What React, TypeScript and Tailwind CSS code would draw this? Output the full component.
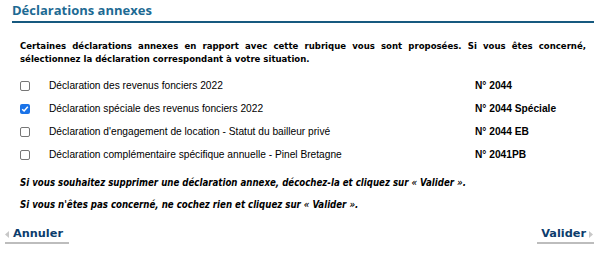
import React from "react";

const rows = [
  { label: "Déclaration des revenus fonciers 2022", code: "N° 2044", checked: false },
  { label: "Déclaration spéciale des revenus fonciers 2022", code: "N° 2044 Spéciale", checked: true },
  { label: "Déclaration d'engagement de location - Statut du bailleur privé", code: "N° 2044 EB", checked: false },
  { label: "Déclaration complémentaire spécifique annuelle - Pinel Bretagne", code: "N° 2041PB", checked: false },
];

function Box({ checked }: { checked: boolean }) {
  if (checked) {
    return (
      <span className="flex h-[10px] w-[10px] items-center justify-center rounded-[2px] bg-[#1a73e8]">
        <svg width="8" height="8" viewBox="0 0 8 8">
          <path d="M1.2 4.2 L3.1 6 L6.8 1.8" fill="none" stroke="#fff" strokeWidth="1.5" />
        </svg>
      </span>
    );
  }
  return <span className="block h-[10px] w-[10px] rounded-[2px] border border-[#767676] bg-white" />;
}

export default function App() {
  return (
    <div className="relative h-[255px] w-[606px] overflow-hidden bg-white text-black">
      <div className="mx-[12px] border-b-2 border-[#16597f] pt-[2px] pb-[2px]">
        <h1 className="text-[13px] leading-[17px] font-bold text-[#1d6a93]" style={{ fontFamily: '"Open Sans", sans-serif' }}>
          Déclarations annexes
        </h1>
      </div>
      <p
        className="mx-[20px] mt-[16px] text-justify text-[9.5px] leading-[13px] font-bold"
        style={{ fontFamily: '"DejaVu Sans Condensed", "DejaVu Sans", sans-serif' }}
      >
        Certaines déclarations annexes en rapport avec cette rubrique vous sont proposées. Si vous êtes concerné, sélectionnez la déclaration correspondant à votre situation.
      </p>
      <div className="mt-[9px] flex flex-col" style={{ fontFamily: '"Liberation Sans", Arial, sans-serif' }}>
        {rows.map((r) => (
          <div key={r.code} className="flex h-[23px] items-center text-[10.2px]">
            <div className="flex w-[49px] justify-start pl-[20px]">
              <Box checked={r.checked} />
            </div>
            <div className="w-[426px]">{r.label}</div>
            <div className="font-bold">{r.code}</div>
          </div>
        ))}
      </div>
      <div
        className="mx-[20px] mt-[10px] flex flex-col gap-[9px] text-[9.6px] leading-[13px] font-bold italic"
        style={{ fontFamily: '"DejaVu Sans Condensed", "DejaVu Sans", sans-serif' }}
      >
        <p>Si vous souhaitez supprimer une déclaration annexe, décochez-la et cliquez sur « Valider ».</p>
        <p>Si vous n'êtes pas concerné, ne cochez rien et cliquez sur « Valider ».</p>
      </div>
      <div
        className="mt-[15px] ml-[5px] mr-[12px] flex justify-between text-[11.3px] font-bold text-[#0c3c6c]"
        style={{ fontFamily: '"DejaVu Sans", sans-serif' }}
      >
        <div className="flex items-center border-b-2 border-[#bdbdbd] pr-[6px] leading-[16px]">
          <svg width="4" height="7" viewBox="0 0 4 7" className="mr-[4px]">
            <path d="M4 0 L0 3.5 L4 7 Z" fill="#c8c8c8" />
          </svg>
          Annuler
        </div>
        <div className="flex items-center border-b-2 border-[#bdbdbd] pl-[4px] pr-[1px] leading-[16px]">
          Valider
          <svg width="4" height="7" viewBox="0 0 4 7" className="ml-[3px]">
            <path d="M0 0 L4 3.5 L0 7 Z" fill="#c8c8c8" />
          </svg>
        </div>
      </div>
    </div>
  );
}
